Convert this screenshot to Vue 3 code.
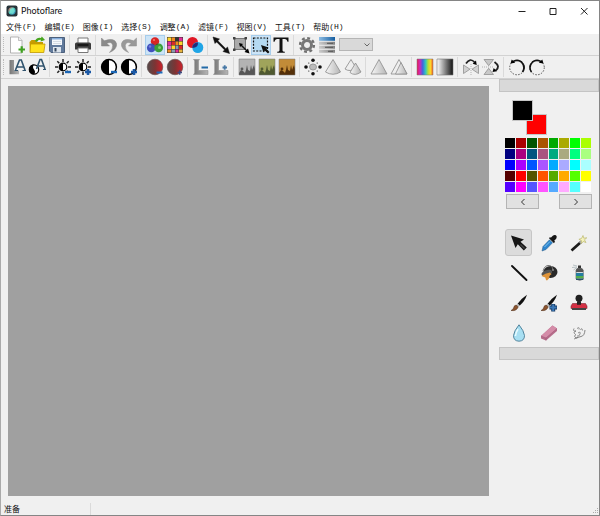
<script setup>
import { ref } from 'vue'

const menus = [
  ['文件', '(F)'], ['编辑', '(E)'], ['图像', '(I)'], ['选择', '(S)'], ['调整', '(A)'],
  ['滤镜', '(F)'], ['视图', '(V)'], ['工具', '(T)'], ['帮助', '(H)'],
]

const mainGroups = [
  ['new', 'open', 'save'],
  ['print'],
  ['undo', 'redo'],
  ['channels', 'mosaic', 'overlap'],
  ['resize', 'scale', 'select', 'text'],
  ['settings', 'list'],
]
const filterGroups = [
  ['levels', 'contrast'],
  ['brightLess', 'brightMore'],
  ['contrastLess', 'contrastMore'],
  ['satLess', 'satMore'],
  ['gammaLess', 'gammaMore'],
  ['grey', 'oldPhoto', 'sepia'],
  ['dust', 'soften', 'blur'],
  ['sharpen', 'reinforce'],
  ['rainbow', 'gradient'],
  ['flipH', 'flipV'],
  ['rotateLeft', 'rotateRight'],
]
const checked = ref(['channels', 'select'])

const palette = [
  '#000000', '#aa0000', '#005500', '#aa5500', '#00aa00', '#aaaa00', '#00ff00', '#aaff00',
  '#00007f', '#aa007f', '#00557f', '#aa557f', '#00aa7f', '#aaaa7f', '#00ff7f', '#aaff7f',
  '#0000ff', '#aa00ff', '#0055ff', '#aa55ff', '#00aaff', '#aaaaff', '#00ffff', '#aaffff',
  '#550000', '#ff0000', '#555500', '#ff5500', '#55aa00', '#ffaa00', '#55ff00', '#ffff00',
  '#5500ff', '#ff00ff', '#5555ff', '#ff55ff', '#55aaff', '#ffaaff', '#55ffff', '#ffffff',
]

const tools = ['pointer', 'picker', 'wand', 'line', 'bucket', 'spray', 'brush', 'advBrush', 'stamp', 'drop', 'eraser', 'smudge']
const activeTool = ref('pointer')

const minus = '<path d="M11 14h6" stroke="#1b66b5" stroke-width="2.4"/>'
const plus = '<path d="M11 14h6M14 11v6" stroke="#1b58a5" stroke-width="2.6"/>'
const half = '<circle cx="9" cy="9" r="7.400" fill="#fff" stroke="#000" stroke-width="1.500"/><path d="M9 1.600a7.400 7.400 0 0 0 0 14.800z"/>'
const sun = '<path d="M9 1v3M9 14v3M1 9h3M14 9h3M3.3 3.3l2 2M12.7 12.7l2 2M3.3 14.7l2-2M12.7 5.3l2-2" stroke="#222" stroke-width="1.5"/><circle cx="9" cy="9" r="3.8" fill="#fff" stroke="#000" stroke-width="1.2"/><path d="M9 5a4 4 0 0 0 0 8z"/>'
const sat = '<circle cx="9" cy="9" r="7.800" fill="url(#satFill)" stroke="#5c4a4a" stroke-width=".6"/>'
const ell = '<path d="M1.500 1.500H7.500L6.500 2.800V12.500h9.500v4H1.500l1.200-1.500V2.800z" fill="url(#steel)" stroke="#858585" stroke-width=".5"/>'
const city = (sky, ink) =>
  `<path d="M1 1h16v16H1z" fill="${sky}"/><path d="M1 15l2-3 2 1 2 2 1-3 1-5 1 5 2 1 1-6 1 5 2-5 1 4v6H1z" fill="${ink}"/><circle cx="4" cy="11" r="1.4" fill="${ink}"/><path d="M1 1h16v16H1z" fill="none" stroke="#777" stroke-width=".5"/>`
const brush = '<path d="M17 .800Q12 4 7.600 9.800l2 2Q15 7 17 .800z" fill="#111"/><path d="M7.800 9.800l-1.600 1.400 2 2 1.500-1.600z" fill="#bbb"/><path d="M6.300 11q-2.300.3-2.600 2.600-.3 1.900-2.700 2.900 5.600.8 7.200-3.500z" fill="#8b5530" stroke="#4a2a16" stroke-width=".5"/>'

const icons = {
  new: '<path d="M2.500 1h8l3.500 3.500V17H2.500z" fill="#fff" stroke="#aaa" stroke-width=".9"/><path d="M10.500 1v3.500H14" fill="#eee" stroke="#aaa" stroke-width=".7"/><path d="M10.500 13.500h6.500M13.700 10.200v6.600" stroke="#3fa020" stroke-width="2.200"/>',
  open: '<path d="M1.500 6l2-2h4L9 6h6v10H2z" fill="#c79c00"/><path d="M7 5q2-4 6-3l.8-1.500L17 4l-4.500 1.500.4-1.800Q10 3.500 9 6z" fill="#46a51d"/><path d="M2.500 8h14.500L15.800 16.500H2z" fill="#ffe11c" stroke="#c09800" stroke-width=".8"/>',
  save: '<path d="M1.500 1.500h15v15H3l-1.500-1.500z" fill="#617a9c" stroke="#4c607c"/><path d="M4 2h10v7H4z" fill="#f4f7fb"/><path d="M4 2h10v1.500H4z" fill="#85addd"/><path d="M5 5.500h8M5 7.500h8" stroke="#c5ced9" stroke-width=".7"/><path d="M5 11h8v5.500H5z" fill="#dce4ec"/><path d="M6.500 12h2v3.500h-2z" fill="#34465e"/>',
  print: '<path d="M4 2h10v6H4z" fill="#fff" stroke="#777"/><path d="M1 8q0-1.500 1.500-1.500h13Q17 6.500 17 8v5.500H1z" fill="#3b3b3b"/><path d="M3.500 9h11" stroke="#111" stroke-width="1.500"/><path d="M4 12h10v4.500H4z" fill="#fff" stroke="#777"/>',
  undo: '<path d="M1.500 2v8h8L6.800 7.300Q12 5 12.700 9.500 13 13 9.500 16.500 17.500 13 16.500 7.500 14.500 1 4.300 4.800z" fill="#8b8b8b" stroke="#808080" stroke-width=".5"/>',
  redo: '<path d="M16.500 2v8h-8l2.700-2.700Q6 5 5.300 9.500 5 13 8.500 16.500.500 13 1.500 7.500 3.500 1 13.700 4.800z" fill="#999" stroke="#8d8d8d" stroke-width=".5"/>',
  channels: '<circle cx="9" cy="5.500" r="4.200" fill="#d92424"/><circle cx="5.300" cy="11.800" r="4.400" fill="#4050bd"/><circle cx="12.700" cy="11.800" r="4.400" fill="#3b9f3b"/><path d="M5.300 7.400Q7.500 7.500 9 9.500 10.500 7.500 12.700 7.400 10.500 11 5.300 7.400z" fill="#643030"/><circle cx="8" cy="4" r="1.100" fill="#f5776b"/><circle cx="4" cy="10.500" r="1.200" fill="#7680dc"/><circle cx="13.500" cy="11.500" r="1.500" fill="#82cf70"/>',
  mosaic: '<path d="M1 1h16v16H1z" fill="#333"/><path d="M1.500 1.500h3.500v3.500H1.500zM13 5.500h3.500V9H13zM5.500 9.500H9V13H5.500z" fill="#ffd52b"/><path d="M5.500 1.500H9v3.500H5.500zM9.500 5.500h3V9h-3zM1.500 13.500H5v3H1.500z" fill="#f18b20"/><path d="M1.500 5.500H5V9H1.500zM13 1.500h3.500v3.500H13zM9.500 13.500h3v3h-3z" fill="#e22c98"/><path d="M5.500 5.500H9V9H5.500zM13 9.500h3.500V13H13z" fill="#d92828"/><path d="M9.500 9.500h3V13h-3zM5.500 13.500H9v3H5.500z" fill="#8a9cae"/><path d="M1.500 9.500H5V13H1.500z" fill="#e660be"/><path d="M13 13.500h3.500v3H13z" fill="#e9b43d"/>',
  overlap: '<circle cx="6.500" cy="6.500" r="5.500" fill="#e01724"/><circle cx="11.800" cy="11.500" r="5.500" fill="#20a5e6"/><path d="M6.400 12q-.5-5 5.600-5.500.4 5-5.600 5.500z" fill="#252b78"/>',
  resize: '<path d="M1 1l6.500 2-1.700 1.700 8 8 1.700-1.700 2 6.500-6.500-2 1.600-1.600-8-8L3 7.500z" fill="#111" stroke="#111" stroke-width=".5"/>',
  scale: '<path d="M2.500 2.500h11v11h-11z" fill="#aaa" stroke="#777"/><path d="M1 1h2.500v2.500H1zM12.500 1H15v2.500h-2.500zM1 12.500h2.500V15H1z" fill="#444"/><path d="M9 9l6 6" stroke="#111" stroke-width="1.400"/><path d="M17.500 17.500l-5-1.500 3.500-3.500zM7 7l4 1-3 3z"/>',
  select: '<path d="M1.500 2h14v13h-14z" fill="#b5daf2" stroke="#111" stroke-width="1.200" stroke-dasharray="2 1.300"/><path d="M9 9l7.500 2.500-2.200 1.300 3.200 3.300-1.500 1.500-3.300-3.200-1.200 2.100z" fill="#111"/>',
  text: '<path d="M1.500 1.500h15v4.200h-1Q15 3 13 3h-2.500v11.500q0 1.300 2.300 1.300v1H5.200v-1q2.300 0 2.300-1.300V3H5Q3 3 2.500 5.700h-1z" fill="#111"/>',
  settings: '<circle cx="9" cy="9" r="6.900" fill="none" stroke="#707070" stroke-width="2.400" stroke-dasharray="2.900 2.519"/><circle cx="9" cy="9" r="4.500" fill="#eee" stroke="#777" stroke-width="3"/>',
  list: '<path d="M1 1h16v3.800H1z" fill="url(#bar)"/><path d="M1 5.800h16v3H1zM1 9.800h16v3H1zM1 13.800h16v3H1z" fill="url(#row)"/><path d="M9 7.300h6M7 11.300h8M10 15.300h5" stroke="#555"/>',
  levels: '<path d="M1.500 2H6v10.500h5v3.700H1.500z" fill="url(#steel)"/><path d="M7.500 12L11.500 2h1.800L17 12M9 9h6.500" fill="none" stroke="#30536d" stroke-width="1.600"/><path d="M6.500 12.500h3.500M14.500 12.500H18" stroke="#30536d"/>',
  contrast: '<circle cx="6" cy="11.500" r="4.700" fill="#fff" stroke="#000" stroke-width="1.200"/><path d="M6 6.500a5 5 0 0 0 0 10q2-2.500 0-5t0-5z"/><path d="M8.500 11L12 1.500h1.500L17 11M10 8h6" fill="none" stroke="#30536d" stroke-width="1.600"/><path d="M15 11.500h3" stroke="#30536d"/>',
  brightLess: sun + minus,
  brightMore: sun + plus,
  contrastLess: half + minus,
  contrastMore: half + plus,
  satLess: sat + '<path d="M10.500 14.500h6" stroke="#1b6bbd" stroke-width="2"/>',
  satMore: sat + '<path d="M11.500 14.500h4.500M13.700 12.300v4.400" stroke="#3c4a80" stroke-width="1.600"/>',
  gammaLess: ell + '<path d="M9.500 9.500H16" stroke="#236ba8" stroke-width="2"/>',
  gammaMore: ell + '<path d="M10.500 9.500h4.500M12.700 7.200v4.500" stroke="#4778a5" stroke-width="1.800"/>',
  grey: city('#b3b3b3', '#565656'),
  oldPhoto: city('#a0a45b', '#4f5930'),
  sepia: city('#c28b38', '#553009'),
  dust: '<ellipse cx="9" cy="9" rx="3.500" ry="3" fill="#bbb" stroke="#999"/><g fill="#111"><circle cx="9" cy="2.300" r="1.800"/><circle cx="9" cy="15.700" r="1.800"/><circle cx="2" cy="9" r="1.800"/><circle cx="16" cy="9" r="1.800"/><circle cx="4.800" cy="5" r=".6"/><circle cx="13.200" cy="5" r=".6"/><circle cx="4.800" cy="13" r=".6"/><circle cx="13.200" cy="13" r=".6"/></g>',
  soften: '<path d="M9 1.500L16.500 14Q9 18.500 1.500 14z" fill="url(#cone)" stroke="#8a8a8a" stroke-width=".8"/>',
  blur: '<path d="M7 1.500L12 10Q6 14.500 1 11z" fill="#eee" stroke="#888" stroke-width=".8"/><path d="M11.500 5L17 14Q11 18.500 6 14.500z" fill="url(#cone)" stroke="#8a8a8a" stroke-width=".8"/>',
  sharpen: '<path d="M9 1.500L17 16H1z" fill="url(#cone)" stroke="#8a8a8a" stroke-width=".8"/>',
  reinforce: '<path d="M9 1.500L17 16H1z" fill="#eee" stroke="#8a8a8a" stroke-width=".8"/><path d="M11 4.500L17 16H5.500z" fill="url(#cone)" stroke="#8a8a8a" stroke-width=".8"/>',
  rainbow: '<path d="M1 1h16v16H1z" fill="url(#rain)" stroke="#777" stroke-width=".5"/>',
  gradient: '<path d="M1 1h16v16H1z" fill="url(#mono)" stroke="#777" stroke-width=".6"/>',
  flipH: '<path d="M1.500 7v8.500L8 11.200zM16.500 7v8.500L10 11.200z" fill="#d0d0d0" stroke="#909090" stroke-width=".8"/><path d="M9 6v11" stroke="#999" stroke-width=".7" stroke-dasharray="1 1"/><path d="M4 5.500Q8-.8 12.700 4.300" fill="none" stroke="#222" stroke-width="1.700"/><path d="M14.700 7l-4-1.200 3.300-3.300z"/>',
  flipV: '<path d="M2 1.500h9.500L6.700 7.700zM2 16.500h9.500L6.700 10.300z" fill="#c8c8c8" stroke="#909090" stroke-width=".8"/><path d="M0 9h12" stroke="#999" stroke-width=".7" stroke-dasharray="1 1"/><path d="M12.500 4Q19 8.500 13.500 12.700" fill="none" stroke="#222" stroke-width="1.900"/><path d="M10.500 14l1.200-4 3 3.300z"/>',
  rotateLeft: '<circle cx="9" cy="9.500" r="7.300" fill="none" stroke="#444" stroke-width=".9" stroke-dasharray="1.500 1.400"/><path d="M4.500 4Q9 .800 13.500 4 18 9 14.500 14" fill="none" stroke="#111" stroke-width="1.800"/><path d="M2.500 5.500l1.200-4 3.500 3.200z"/>',
  rotateRight: '<circle cx="9" cy="9.500" r="7.300" fill="none" stroke="#444" stroke-width=".9" stroke-dasharray="1.500 1.400"/><path d="M13.500 4Q9 .800 4.500 4 0 9 3.500 14" fill="none" stroke="#111" stroke-width="1.600"/><path d="M15.500 5.500l-1.200-4-3.500 3.200z"/>',
  pointer: '<path d="M1 1.500l13 4-3.500 2.300 6.300 5.700-3 3-6-6.300L5.500 14z" fill="#151515"/><path d="M10.500 10.500l4 4" stroke="#444" stroke-width="1.300"/>',
  picker: '<path d="M2 17l1-4.500 6.500-6.700 3 3L6 15.500z" fill="#2d85cf" stroke="#225783" stroke-width=".5"/><path d="M4.500 13L10 7.500" stroke="#80c5ee"/><path d="M9 4.300l5 5 1-1.800-.8-.8 2-2q1.300-2-.2-3.400-1.500-1-3.200.4l-2 2-.8-.6z" fill="#151515"/>',
  wand: '<path d="M1.500 16.500L11 8" stroke="#1b1b1b" stroke-width="2.700"/><path d="M9.800 9L12 7" stroke="#aaa" stroke-width="2.600"/><path d="M13 1.500l.8 2.700 3-.4-2.400 2 1.600 2.700-2.800-1-2 2 .2-3-2.500-1.200 2.700-.9z" fill="#f6f3bd" stroke="#b9b66c" stroke-width=".7"/>',
  line: '<path d="M2 2l14.500 14" stroke="#111" stroke-width="1.900" stroke-linecap="round"/>',
  bucket: '<ellipse cx="10.500" cy="8" rx="7" ry="6" fill="#292929"/><path d="M3 7Q5 0 10.500 1.800 13 3 13 6" fill="none" stroke="#777"/><ellipse cx="6.800" cy="9" rx="5.500" ry="3" fill="#555" transform="rotate(-18 7 9)"/><path d="M1.500 12Q5 9 10 8.500l1.500 2q-2 .2-2.500 4L7 16.500q-1.300 0-1.700-3-2-.8-3.800-1.500z" fill="#e0953a"/><circle cx="13" cy="6" r="1" fill="#888"/>',
  spray: '<path d="M6 6.500Q6 4 9.500 4t3.800 2.500V15q-3.500 3-7.300 0z" fill="#d8dee0" stroke="#555" stroke-width=".6"/><path d="M6 6.500Q6 4 9.500 4t3.800 2.500L13 8H6z" fill="#555"/><path d="M8 1.500h3V4H8z" fill="#333"/><path d="M6 9h7.300v3H6z" fill="#247da0"/><path d="M6 12h7.300v2.500H6z" fill="#55ae4c"/><path d="M6 14.500h7.300V16H6z" fill="#28536c"/><path d="M7 2L3 1M7 3L2 3.500M7 3.500L3.500 6" stroke="#b8c2c5"/>',
  brush,
  advBrush: brush + '<path d="M9.500 13.500h7.500M13.200 10v7.500" stroke="#173b67" stroke-width="4"/><path d="M10 13.500h6.500M13.200 10.500v6.500" stroke="#3b78b6" stroke-width="2"/>',
  stamp: '<circle cx="9" cy="4.300" r="3.500" fill="#202020"/><path d="M7.500 7h3l1 4h-5z" fill="#292929"/><path d="M2.500 9.500h13L17 12v2.500H1V12z" fill="#d32f43" stroke="#7c2430" stroke-width=".6"/><path d="M7 7.500h4v3.300H7z" fill="#222"/><path d="M2 14h14v2H2z" fill="#444"/>',
  drop: '<path d="M9 .800Q4 7 3.500 11.500 3.500 17 9 17.200 14.500 17 14.500 11.500 14 7 9 .800z" fill="#a8dff2" stroke="#477b94" stroke-width=".9"/><path d="M8 5Q5.500 9 5.500 12" fill="none" stroke="#e8fbff" stroke-width="1.500"/>',
  eraser: '<path d="M1 12L12.500 1.500l4.500 3v2.500L6 16.500l-5-2z" fill="#b66c8a"/><path d="M1 12L12.500 1.500l4.500 3L6 14z" fill="#d48ca8"/><path d="M1 12l5 2v2.500M6 14L17 4.500" fill="none" stroke="#a35c7a" stroke-width=".6"/>',
  smudge: '<path d="M4 4.500q-1.500 3 2 2.500Q2.500 8 5.500 10.500 3.500 12.500 6 14l5-1.500Q14.500 12 15 6" fill="none" stroke="#777" stroke-width=".9"/><path d="M7 4.500q3-2 2 1M10.500 6q1.500-3 2 .5M8 9q3-2 2 1t-3 2M4 15l4-1.500" fill="none" stroke="#777" stroke-width=".8"/>',
}
</script>

<template>
  <div class="window">
    <svg class="defs" aria-hidden="true">
      <defs>
        <linearGradient id="steel"><stop offset="0" stop-color="#777" /><stop offset="1" stop-color="#b5b5b5" /></linearGradient>
        <linearGradient id="satFill"><stop offset="0" stop-color="#544b4b" /><stop offset=".5" stop-color="#7c3434" /><stop offset="1" stop-color="#d0202a" /></linearGradient>
        <linearGradient id="cone"><stop offset="0" stop-color="#f7f7f7" /><stop offset="1" stop-color="#b5b5b5" /></linearGradient>
        <linearGradient id="mono"><stop offset="0" stop-color="#fff" /><stop offset="1" stop-color="#111" /></linearGradient>
        <linearGradient id="bar"><stop offset="0" stop-color="#8dbde4" /><stop offset="1" stop-color="#155d9f" /></linearGradient>
        <linearGradient id="row"><stop offset="0" stop-color="#ccc" /><stop offset="1" stop-color="#808080" /></linearGradient>
        <linearGradient id="rain">
          <stop offset="0" stop-color="#e51e51" /><stop offset=".18" stop-color="#cf28b8" /><stop offset=".36" stop-color="#3d68df" />
          <stop offset=".54" stop-color="#36c7bd" /><stop offset=".7" stop-color="#b8dc36" /><stop offset=".85" stop-color="#ffd52b" /><stop offset="1" stop-color="#ee5b25" />
        </linearGradient>
        <linearGradient id="logo" x2="1" y2="1"><stop offset="0" stop-color="#ee5c55" /><stop offset=".45" stop-color="#51d3c2" /><stop offset="1" stop-color="#2873b0" /></linearGradient>
      </defs>
    </svg>

    <header class="titlebar">
      <svg class="logo" viewBox="0 0 12 12" aria-hidden="true">
        <rect x=".5" y=".5" width="11" height="11" rx="2" fill="#263238" />
        <circle cx="6" cy="6" r="3.700" fill="url(#logo)" />
        <path d="M4 4l3-1 2 3-2 3-3-1z" fill="#80e8da" opacity=".7" />
      </svg>
      <h1>Photoflare</h1>
      <div class="controls">
        <button type="button" aria-label="Minimize"><svg viewBox="0 0 8 8"><path d="M.5 4.500h7" /></svg></button>
        <button type="button" aria-label="Maximize"><svg viewBox="0 0 8 8"><path d="M1 1.500h6v6H1z" /></svg></button>
        <button type="button" aria-label="Close"><svg viewBox="0 0 8 8"><path d="M1 1l6.500 6.500M7.500 1L1 7.500" /></svg></button>
      </div>
    </header>

    <nav class="menubar">
      <button v-for="m in menus" :key="m[0]" type="button">{{ m[0] }}<span>{{ m[1] }}</span></button>
    </nav>

    <div class="toolbar" role="toolbar" aria-label="Main">
      <div v-for="(group, i) in mainGroups" :key="i" class="group">
        <button v-for="name in group" :key="name" type="button" :aria-label="name" :class="{ on: checked.includes(name) }">
          <svg viewBox="0 0 18 18" v-html="icons[name]" />
        </button>
      </div>
      <div class="combo">
        <select aria-label="Zoom" disabled><option></option></select>
        <svg viewBox="0 0 6 4" aria-hidden="true"><path d="M.5.5L3 3 5.500.5" /></svg>
      </div>
    </div>

    <div class="toolbar filters" role="toolbar" aria-label="Filters">
      <div v-for="(group, i) in filterGroups" :key="i" class="group">
        <button v-for="name in group" :key="name" type="button" :aria-label="name">
          <svg viewBox="0 0 18 18" v-html="icons[name]" />
        </button>
      </div>
    </div>

    <div class="workspace">
      <main class="canvas"></main>
      <aside class="dock">
        <div class="dock-title"></div>
        <div class="swatches">
          <button type="button" class="fore" aria-label="Foreground colour"></button>
          <button type="button" class="back" aria-label="Background colour"></button>
        </div>
        <div class="palette">
          <button v-for="c in palette" :key="c" type="button" :aria-label="c" :style="{ background: c }"></button>
        </div>
        <div class="pager">
          <button type="button" aria-label="Previous"><svg viewBox="0 0 6 8"><path d="M4.500 1L1.500 4l3 3" /></svg></button>
          <button type="button" aria-label="Next"><svg viewBox="0 0 6 8"><path d="M1.500 1l3 3-3 3" /></svg></button>
        </div>
        <div class="tools">
          <button v-for="t in tools" :key="t" type="button" :aria-label="t" :class="{ active: t === activeTool }" @click="activeTool = t">
            <svg viewBox="0 0 18 18" v-html="icons[t]" />
          </button>
        </div>
        <div class="dock-title"></div>
      </aside>
    </div>

    <footer class="status">
      <span class="message">准备</span>
      <svg class="grip" viewBox="0 0 8 8" aria-hidden="true"><path d="M6 1h1v1H6zM4 3h1v1H4zM6 3h1v1H6zM2 5h1v1H2zM4 5h1v1H4zM6 5h1v1H6z" fill="#aaa" /></svg>
    </footer>
  </div>
</template>

<style>
body {
  margin: 0;
  background: #f0f0f0;
}
</style>

<style scoped>
.window {
  box-sizing: border-box;
  display: flex;
  flex-direction: column;
  min-height: 100vh;
  border: 1px solid #858585;
  border-left-color: #aaa;
  background: #f0f0f0;
  color: #111;
  font: 8px/12px "Noto Sans CJK SC", sans-serif;
}
.defs {
  position: absolute;
  width: 0;
  height: 0;
}
button {
  display: flex;
  align-items: center;
  justify-content: center;
  box-sizing: border-box;
  margin: 0;
  padding: 0;
  border: 0;
  background: none;
  color: inherit;
  font: inherit;
}
.titlebar {
  display: flex;
  align-items: center;
  height: 19px;
  padding-left: 5px;
  background: #fff;
}
.logo {
  width: 12px;
  height: 12px;
  margin-right: 3px;
}
h1 {
  flex: 1;
  margin: 0;
  font: 9px/12px Lato, sans-serif;
}
.controls {
  display: flex;
}
.controls button {
  width: 31px;
  height: 19px;
}
.controls svg {
  width: 8px;
  height: 8px;
  fill: none;
  stroke: #222;
}
.menubar {
  display: flex;
  gap: 8px;
  height: 14px;
  padding-left: 5px;
  background: #fff;
}
.menubar span {
  font: 8px/12px "Liberation Mono", monospace;
}
.toolbar {
  display: flex;
  align-items: center;
  height: 21px;
  padding-left: 6px;
  border-bottom: 1px solid #d2d2d2;
}
.toolbar::before {
  content: "";
  align-self: stretch;
  margin: 3px 0;
  margin-left: -4px;
  width: 2px;
  border-left: 1px dotted #bbb;
  padding-right: 1px;
}
.filters {
  height: 22px;
}
.group {
  display: flex;
}
.group + .group {
  margin-left: 2px;
  padding-left: 3px;
  border-left: 1px solid #dadada;
}
.group button {
  width: 20px;
  height: 20px;
}
.group svg {
  width: 18px;
  height: 18px;
}
.group .on {
  background: #cce4f7;
  box-shadow: inset 0 0 0 1px #a6cdec;
}
.combo {
  display: grid;
  align-items: center;
  margin-left: 2px;
}
.combo select,
.combo svg {
  grid-area: 1 / 1;
}
.combo select {
  appearance: none;
  box-sizing: border-box;
  width: 34px;
  height: 13px;
  border: 1px solid #b5b5b5;
  border-radius: 0;
  background: #d9d9d9;
  opacity: 1;
}
.combo svg {
  z-index: 1;
  justify-self: end;
  width: 6px;
  height: 4px;
  margin-right: 3px;
  fill: none;
  stroke: #666;
}
.workspace {
  display: flex;
  flex: 1;
}
.canvas {
  flex: 1;
  margin: 7px 10px 4px 7px;
  background: #a0a0a0;
}
.dock {
  width: 100px;
}
.dock-title {
  box-sizing: border-box;
  height: 13px;
  border: 1px solid #c4c4c4;
  background: #d9d9d9;
}
.swatches {
  display: grid;
  grid-template-columns: 14px 7px 14px;
  grid-template-rows: 14px 7px 14px;
  padding: 8px 13px 3px;
}
.swatches button {
  border: 1px solid #c6c6c6;
}
.swatches .fore {
  z-index: 1;
  grid-area: 1 / 1 / 3 / 3;
  background: #000;
}
.swatches .back {
  grid-area: 2 / 2 / 4 / 4;
  background: #f00;
}
.palette {
  display: grid;
  grid-template-columns: repeat(8, 1fr);
  grid-auto-rows: 1fr;
  gap: 1px;
  height: 54px;
  margin: 0 8px 0 6px;
}
.pager {
  display: flex;
  justify-content: space-between;
  padding: 2px 7px 0;
}
.pager button {
  width: 33px;
  height: 15px;
  border: 1px solid #b4b4b4;
  background: #e1e1e1;
}
.pager svg {
  width: 6px;
  height: 8px;
  fill: none;
  stroke: #333;
}
.tools {
  display: grid;
  grid-template-columns: repeat(3, 27px);
  gap: 3px;
  padding: 20px 6px 1px;
}
.tools button {
  height: 27px;
  border: 1px solid transparent;
  border-radius: 3px;
}
.tools svg {
  width: 18px;
  height: 18px;
}
.tools .active {
  border-color: #c6c6c6;
  background: #dcdcdc;
}
.status {
  display: flex;
  align-items: end;
  justify-content: space-between;
  height: 15px;
}
.message {
  width: 86px;
  padding-left: 3px;
  border-right: 1px solid #dadada;
}
.grip {
  width: 8px;
  height: 8px;
}
</style>
